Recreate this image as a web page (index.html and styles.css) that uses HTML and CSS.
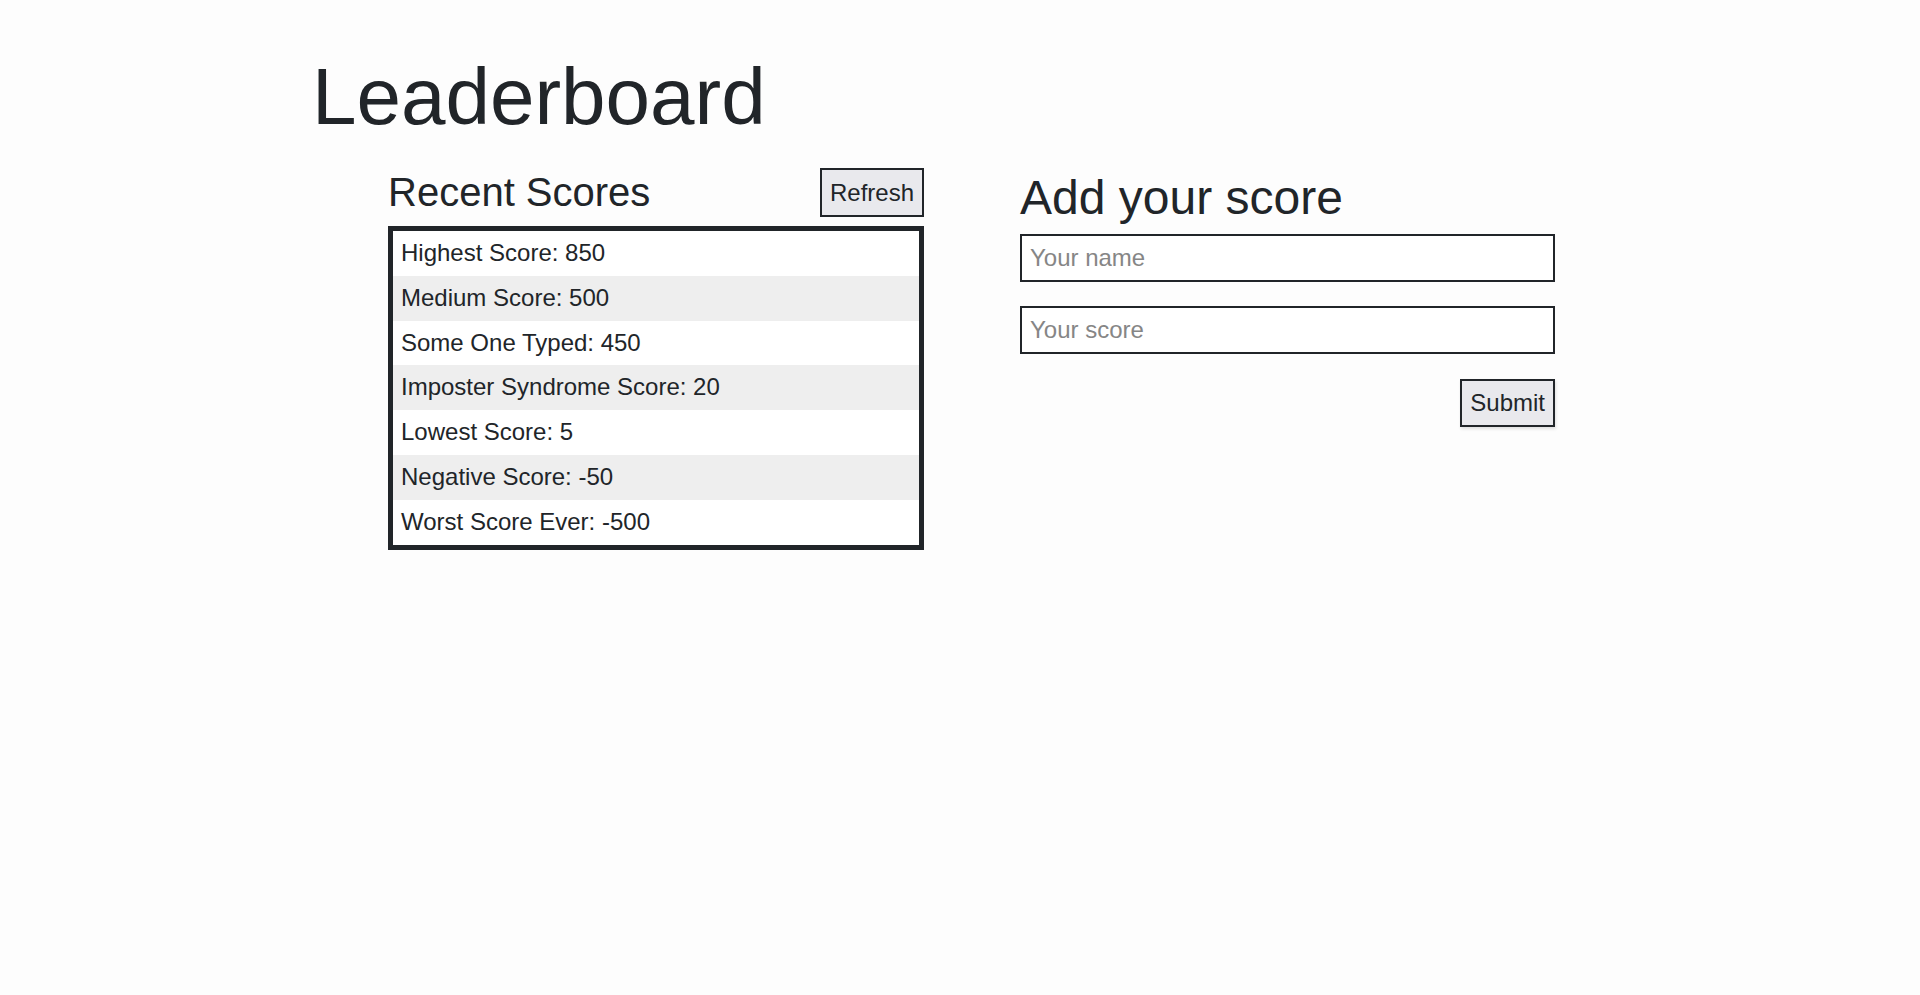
FILE: index.html
```html
<!DOCTYPE html>
<html lang="en">
<head>
<meta charset="utf-8">
<title>Leaderboard</title>
<link rel="stylesheet" href="styles.css">
</head>
<body>
<main class="container">
  <h1 class="title">Leaderboard</h1>
  <div class="columns">
    <section class="scores">
      <div class="scores-header">
        <h2 class="scores-title">Recent Scores</h2>
        <button class="btn" type="button">Refresh</button>
      </div>
      <ul class="score-list">
        <li class="score-item">Highest Score: 850</li>
        <li class="score-item">Medium Score: 500</li>
        <li class="score-item">Some One Typed: 450</li>
        <li class="score-item">Imposter Syndrome Score: 20</li>
        <li class="score-item">Lowest Score: 5</li>
        <li class="score-item">Negative Score: -50</li>
        <li class="score-item">Worst Score Ever: -500</li>
      </ul>
    </section>
    <section class="add-score">
      <h2 class="add-title">Add your score</h2>
      <form class="score-form">
        <input class="field" type="text" placeholder="Your name">
        <input class="field" type="text" placeholder="Your score">
        <div class="form-actions">
          <button class="btn btn-submit" type="button">Submit</button>
        </div>
      </form>
    </section>
  </div>
</main>
</body>
</html>
```

FILE: styles.css
```css
* {
  box-sizing: border-box;
}

html, body {
  margin: 0;
  padding: 0;
}

body {
  background: #fdfdfd;
  color: #212529;
  font-family: "Liberation Sans", Arial, sans-serif;
  font-size: 16px;
  line-height: 1.5;
}

.container {
  width: 1320px;
  margin: 0 auto;
  padding: 49px 12px 0;
}

.title {
  margin: 0;
  font-size: 80px;
  font-weight: 400;
  line-height: 1.2;
}

.columns {
  display: flex;
  align-items: flex-start;
  gap: 96px;
  margin-top: 23px;
  padding-left: 76px;
}

.scores {
  width: 536px;
  flex: none;
}

.scores-header {
  display: flex;
  justify-content: space-between;
  align-items: flex-start;
  margin-bottom: 9px;
}

.scores-title {
  margin: 0;
  font-size: 40px;
  font-weight: 400;
  line-height: 1.2;
}

.btn {
  font-family: "Liberation Sans", Arial, sans-serif;
  font-size: 24px;
  line-height: normal;
  color: #212529;
  background: #e9e9ed;
  border: 2px solid #212529;
  border-radius: 0;
  padding: 9px 8px 8px;
  margin: 0;
}

.btn-submit {
  padding: 8px 8px;
  box-shadow: 1px 2px 3px rgba(0, 0, 0, 0.12);
}

.score-list {
  list-style: none;
  margin: 0;
  padding: 0;
  background: #fff;
  border: 5px solid #212529;
}

.score-item {
  font-size: 24px;
  line-height: 28.8px;
  padding: 8px 8px;
}

.score-item:nth-child(even) {
  background: #eeeeee;
}

.add-score {
  width: 535px;
  flex: none;
}

.add-title {
  margin: 1px 0 7px;
  font-size: 48px;
  font-weight: 400;
  line-height: 1.2;
}

.score-form {
  display: flex;
  flex-direction: column;
  gap: 24px;
}

.field {
  display: block;
  width: 100%;
  font-family: "Liberation Sans", Arial, sans-serif;
  font-size: 24px;
  line-height: normal;
  color: #212529;
  background: #fff;
  border: 2px solid #212529;
  border-radius: 0;
  padding: 8px 8px;
  margin: 0;
  outline: none;
}

.field::placeholder {
  color: #868686;
}

.form-actions {
  display: flex;
  justify-content: flex-end;
  margin-top: 1px;
}
```
